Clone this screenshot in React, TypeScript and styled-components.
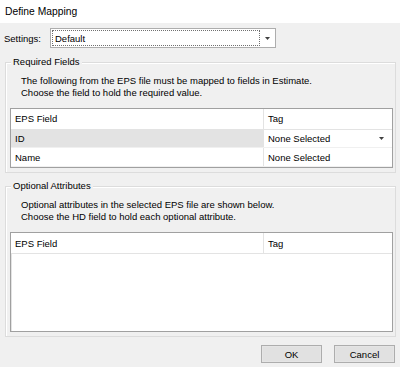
import styled, { createGlobalStyle } from "styled-components";

const GlobalStyle = createGlobalStyle`
  html, body {
    margin: 0;
    padding: 0;
    background: #f0f0f0;
  }
  body {
    font-family: "Liberation Sans", Arial, sans-serif;
    font-size: 9.5px;
    color: #000;
  }
`;

const requiredRows = [
  { field: "ID", tag: "None Selected", selected: true },
  { field: "Name", tag: "None Selected", selected: false },
];

const Arrow = () => (
  <svg width="5" height="3" viewBox="0 0 5 3">
    <path d="M0 0 H5 L2.5 3 Z" fill="#404040" />
  </svg>
);

const App = () => {
  return (
    <>
      <GlobalStyle />
      <Dialog>
        <TitleBar>Define Mapping</TitleBar>
        <Body>
          <SettingsRow>
            <Label>Settings:</Label>
            <Combo>
              <ComboText>Default</ComboText>
              <ComboButton>
                <Arrow />
              </ComboButton>
            </Combo>
          </SettingsRow>

          <GroupBox height={111} first>
            <GroupTitle>Required Fields</GroupTitle>
            <Description>
              The following from the EPS file must be mapped to fields in Estimate.
              <br />
              Choose the field to hold the required value.
            </Description>
            <Grid height={60}>
              <HeaderRow>
                <Cell>EPS Field</Cell>
                <Cell divider>Tag</Cell>
              </HeaderRow>
              {requiredRows.map((row) => (
                <Row key={row.field}>
                  <Cell shaded={row.selected}>{row.field}</Cell>
                  <Cell divider>
                    <CellValue>{row.tag}</CellValue>
                    {row.selected && <Arrow />}
                  </Cell>
                </Row>
              ))}
            </Grid>
          </GroupBox>

          <GroupBox height={151}>
            <GroupTitle>Optional Attributes</GroupTitle>
            <Description>
              Optional attributes in the selected EPS file are shown below.
              <br />
              Choose the HD field to hold each optional attribute.
            </Description>
            <Grid height={100}>
              <HeaderRow>
                <Cell>EPS Field</Cell>
                <Cell divider>Tag</Cell>
              </HeaderRow>
            </Grid>
          </GroupBox>

          <ButtonRow>
            <Button>OK</Button>
            <Button>Cancel</Button>
          </ButtonRow>
        </Body>
      </Dialog>
    </>
  );
};

export default App;

const Dialog = styled.div`
  width: 400px;
  height: 367px;
  display: flex;
  flex-direction: column;
  background: #f0f0f0;
  overflow: hidden;
`;

const TitleBar = styled.div`
  height: 23px;
  flex-shrink: 0;
  display: flex;
  align-items: center;
  padding: 0 0 1px 5px;
  box-sizing: border-box;
  background: #ffffff;
  font-size: 10.3px;
`;

const Body = styled.div`
  display: flex;
  flex-direction: column;
  padding: 0 4px 0 5px;
`;

const SettingsRow = styled.div`
  display: flex;
  align-items: center;
  height: 20px;
  margin-top: 5px;
`;

const Label = styled.div`
  width: 46px;
  padding-left: 0px;
  margin-left: -1px;
`;

const Combo = styled.div`
  width: 226px;
  height: 20px;
  box-sizing: border-box;
  display: flex;
  align-items: stretch;
  border: 1px solid #adadad;
  background: #ffffff;
  padding: 1px;
`;

const ComboText = styled.div`
  flex: 1;
  display: flex;
  align-items: center;
  padding-left: 2px;
  border: 1px dotted #707070;
`;

const ComboButton = styled.div`
  width: 14px;
  display: flex;
  align-items: center;
  justify-content: center;
`;

const GroupBox = styled.div<{ height: number; first?: boolean }>`
  position: relative;
  height: ${({ height }) => height}px;
  box-sizing: border-box;
  margin-top: ${({ first }) => (first ? 14 : 13)}px;
  border: 1px solid #dcdcdc;
  box-shadow: inset 1px 1px 0 #ffffff;
  padding: 12px 2px 0 4px;
  display: flex;
  flex-direction: column;
`;

const GroupTitle = styled.div`
  position: absolute;
  top: -7px;
  left: 5px;
  padding: 0 2px;
  background: #f0f0f0;
  line-height: 12px;
`;

const Description = styled.div`
  padding-left: 11px;
  line-height: 11.5px;
`;

const Grid = styled.div<{ height: number }>`
  height: ${({ height }) => height}px;
  box-sizing: border-box;
  margin-top: 10px;
  border: 1px solid #a0a0a0;
  box-shadow: inset 1px 1px 0 #e3e3e3;
  background: #ffffff;
  display: flex;
  flex-direction: column;
`;

const Row = styled.div`
  display: grid;
  grid-template-columns: 252px 1fr;
  height: 18px;
  border-bottom: 1px solid #f0f0f0;
`;

const HeaderRow = styled(Row)`
  height: 20px;
  border-bottom: 1px solid #e3e3e3;
`;

const Cell = styled.div<{ divider?: boolean; shaded?: boolean }>`
  display: flex;
  align-items: center;
  justify-content: space-between;
  padding: 0 8px 0 4px;
  background: ${({ shaded }) => (shaded ? "#e3e3e3" : "#ffffff")};
  border-left: ${({ divider }) => (divider ? "1px solid #e3e3e3" : "none")};
`;

const CellValue = styled.span``;

const ButtonRow = styled.div`
  display: flex;
  justify-content: flex-end;
  gap: 12px;
  margin-top: 8px;
  padding-right: 1px;
`;

const Button = styled.button`
  width: 61px;
  height: 18px;
  box-sizing: border-box;
  border: 1px solid #adadad;
  box-shadow: inset 0 0 0 1px #e5e5e5;
  background: #e1e1e1;
  font-family: "Liberation Sans", Arial, sans-serif;
  font-size: 9.5px;
  color: #000;
  padding: 0;
`;
